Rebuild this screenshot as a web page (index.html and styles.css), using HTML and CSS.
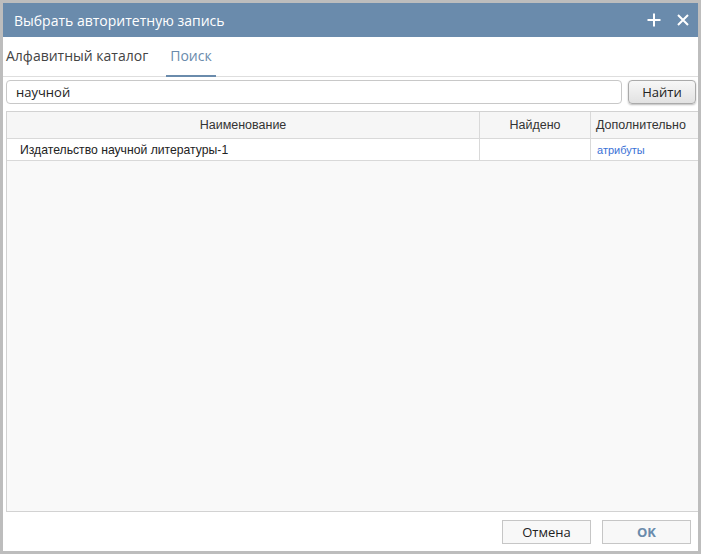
FILE: index.html
```html
<!DOCTYPE html>
<html lang="ru">
  <head>
    <meta charset="UTF-8" />
    <title>Выбрать авторитетную запись</title>
    <link rel="stylesheet" href="styles.css">
  </head>
  <body>
    <div class="dialog">
      <header class="dlg-head">
        <span class="dlg-title">Выбрать авторитетную запись</span>
        <div class="dlg-tools">
          <svg width="14" height="14" viewBox="0 0 14 14"><path d="M7 0.5v13M0.5 7h13" stroke="#fff" stroke-width="2"/></svg>
          <svg width="12" height="12" viewBox="0 0 12 12"><path d="M1 1l10 10M11 1L1 11" stroke="#fff" stroke-width="2"/></svg>
        </div>
      </header>

      <section class="dlg-body">
        <nav class="tabs">
          <span class="tab">Алфавитный каталог</span>
          <span class="tab active">Поиск</span>
        </nav>

        <div class="search-row">
          <input class="search-input" type="text" value="научной">
          <button class="btn-find">Найти</button>
        </div>

        <div class="grid">
          <div class="grid-head">
            <div class="col col-name">Наименование</div>
            <div class="col col-found">Найдено</div>
            <div class="col col-extra">Дополнительно</div>
          </div>
          <div class="grid-row">
            <div class="col col-name">Издательство научной литературы-1</div>
            <div class="col col-found"></div>
            <div class="col col-extra"><a class="attr-link" href="#">атрибуты</a></div>
          </div>
        </div>
      </section>

      <footer class="dlg-foot">
        <button class="btn">Отмена</button>
        <button class="btn btn-ok">OK</button>
      </footer>
    </div>
  </body>
</html>
```

FILE: styles.css
```css
* {
  margin: 0;
  padding: 0;
  box-sizing: border-box;
}

body {
  font-family: "Liberation Sans", Arial, sans-serif;
  background: #fff;
}

.dialog {
  width: 701px;
  height: 554px;
  border: 3px solid #bdbdbd;
  display: flex;
  flex-direction: column;
  background: #fff;
}

.dlg-head {
  height: 34px;
  background: #6a8bac;
  display: flex;
  align-items: center;
  justify-content: space-between;
  padding: 0 9px 0 11px;
}

.dlg-title {
  color: #fff;
  font-family: "Open Sans", sans-serif;
  font-size: 14px;
}

.dlg-tools {
  display: flex;
  align-items: center;
  gap: 16px;
}

.dlg-body {
  flex: 1;
  display: flex;
  flex-direction: column;
}

.tabs {
  height: 40px;
  display: flex;
  align-items: stretch;
  border-bottom: 1px solid #dedede;
}

.tab {
  font-family: "Open Sans", sans-serif;
  font-size: 14px;
  color: #444;
  padding: 9px 3px 0;
  margin-right: 15px;
}

.tab.active {
  color: #6a8bac;
  border-bottom: 2px solid #6a8bac;
  margin-bottom: -1px;
  padding: 9px 4px 0;
}

.search-row {
  display: flex;
  gap: 6px;
  margin: 3px 2px 0 3px;
  height: 24px;
}

.search-input {
  flex: 1;
  border: 1px solid #c8c8c8;
  border-radius: 4px;
  padding: 0 9px;
  font-family: "Open Sans", sans-serif;
  font-size: 13px;
  color: #222;
  outline: none;
}

.btn-find {
  width: 68px;
  border: 1px solid #aaa;
  border-radius: 4px;
  background: linear-gradient(#f7f7f7, #e2e2e2);
  box-shadow: 0 1px 2px #bbb;
  font-family: "Open Sans", sans-serif;
  font-size: 13px;
  color: #222;
}

.grid {
  flex: 1;
  margin: 7px 0 0 3px;
  border: 1px solid #d2d2d2;
  border-right: 0;
  background: #f9f9f9;
}

.grid-head,
.grid-row {
  display: flex;
  border-bottom: 1px solid #d9d9d9;
}

.grid-head {
  height: 27px;
  background: #f6f6f6;
  font-size: 12.5px;
  color: #333;
}

.grid-row {
  height: 22px;
  background: #fff;
  font-size: 12.2px;
  color: #222;
}

.col {
  display: flex;
  align-items: center;
  border-right: 1px solid #d9d9d9;
}

.col-name {
  width: 473px;
}

.col-found {
  width: 111px;
}

.col-extra {
  flex: 1;
  border-right: 0;
  padding-left: 5px;
}

.grid-head .col-name,
.grid-head .col-found {
  justify-content: center;
}

.grid-row .col-name {
  padding-left: 13px;
}

.attr-link {
  font-size: 11px;
  color: #3b72d6;
  text-decoration: none;
  padding-left: 1px;
}

.dlg-foot {
  height: 39px;
  display: flex;
  justify-content: flex-end;
  align-items: center;
  gap: 11px;
  padding-right: 7px;
}

.btn {
  width: 89px;
  height: 24px;
  border: 1px solid #c6c6c6;
  background: #f8f8f8;
  font-family: "Open Sans", sans-serif;
  font-size: 13px;
  color: #222;
}

.btn-ok {
  color: #6a8bac;
  font-weight: bold;
}
```
